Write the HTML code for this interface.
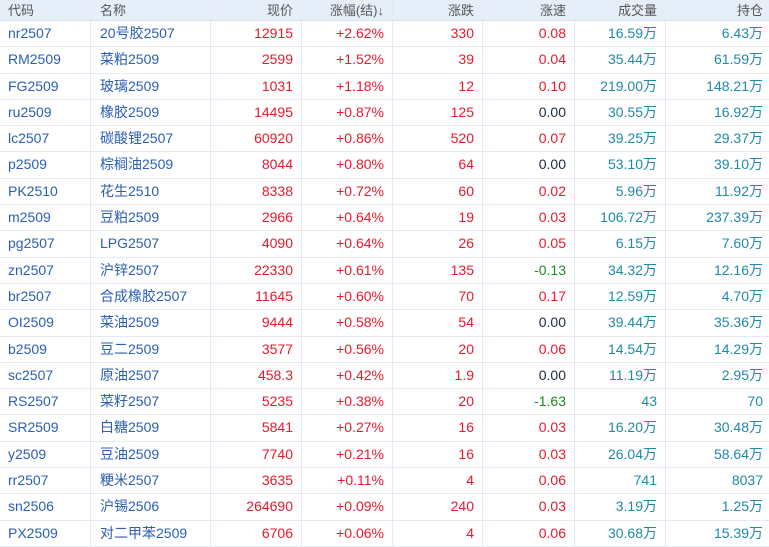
<!DOCTYPE html>
<html><head><meta charset="utf-8"><style>
*{margin:0;padding:0;box-sizing:border-box}
body{width:769px;height:547px;overflow:hidden;background:#fff;font-family:"Liberation Sans","Noto Sans CJK SC",sans-serif;font-size:14px}
.r{display:flex;height:26.3px;border-bottom:1px solid #e3eaf4;line-height:25px}
.h{height:21px;line-height:21px;background:#e6eef9;color:#555;font-size:13px;border-bottom:1px solid #d8e2f0}
.r div{border-right:1px solid #e3eaf4;white-space:nowrap;padding:0 8px 0 6px;text-align:right}
.r div:nth-child(1){width:91px;text-align:left;padding-left:8px}
.r div:nth-child(2){width:120px;text-align:left;padding-left:9px}
.r div:nth-child(3){width:91px}
.r div:nth-child(4){width:91px}
.r div:nth-child(5){width:90px}
.r div:nth-child(6){width:92px}
.r div:nth-child(7){width:91px}
.r div:nth-child(8){width:103px;border-right:none;padding-right:6px}
.b{color:#2b5fb4}
.R{color:#e8192c}.T{color:#1f8aa8}.K{color:#1d2a44}.G{color:#1c8a22}
</style></head><body>
<div class="r h"><div>代码</div><div>名称</div><div>现价</div><div>涨幅(结)↓</div><div>涨跌</div><div>涨速</div><div>成交量</div><div>持仓</div></div>
<div class="r"><div class="b">nr2507</div><div class="b">20号胶2507</div><div class="R">12915</div><div class="R">+2.62%</div><div class="R">330</div><div class="R">0.08</div><div class="T">16.59万</div><div class="T">6.43万</div></div>
<div class="r"><div class="b">RM2509</div><div class="b">菜粕2509</div><div class="R">2599</div><div class="R">+1.52%</div><div class="R">39</div><div class="R">0.04</div><div class="T">35.44万</div><div class="T">61.59万</div></div>
<div class="r"><div class="b">FG2509</div><div class="b">玻璃2509</div><div class="R">1031</div><div class="R">+1.18%</div><div class="R">12</div><div class="R">0.10</div><div class="T">219.00万</div><div class="T">148.21万</div></div>
<div class="r"><div class="b">ru2509</div><div class="b">橡胶2509</div><div class="R">14495</div><div class="R">+0.87%</div><div class="R">125</div><div class="K">0.00</div><div class="T">30.55万</div><div class="T">16.92万</div></div>
<div class="r"><div class="b">lc2507</div><div class="b">碳酸锂2507</div><div class="R">60920</div><div class="R">+0.86%</div><div class="R">520</div><div class="R">0.07</div><div class="T">39.25万</div><div class="T">29.37万</div></div>
<div class="r"><div class="b">p2509</div><div class="b">棕榈油2509</div><div class="R">8044</div><div class="R">+0.80%</div><div class="R">64</div><div class="K">0.00</div><div class="T">53.10万</div><div class="T">39.10万</div></div>
<div class="r"><div class="b">PK2510</div><div class="b">花生2510</div><div class="R">8338</div><div class="R">+0.72%</div><div class="R">60</div><div class="R">0.02</div><div class="T">5.96万</div><div class="T">11.92万</div></div>
<div class="r"><div class="b">m2509</div><div class="b">豆粕2509</div><div class="R">2966</div><div class="R">+0.64%</div><div class="R">19</div><div class="R">0.03</div><div class="T">106.72万</div><div class="T">237.39万</div></div>
<div class="r"><div class="b">pg2507</div><div class="b">LPG2507</div><div class="R">4090</div><div class="R">+0.64%</div><div class="R">26</div><div class="R">0.05</div><div class="T">6.15万</div><div class="T">7.60万</div></div>
<div class="r"><div class="b">zn2507</div><div class="b">沪锌2507</div><div class="R">22330</div><div class="R">+0.61%</div><div class="R">135</div><div class="G">-0.13</div><div class="T">34.32万</div><div class="T">12.16万</div></div>
<div class="r"><div class="b">br2507</div><div class="b">合成橡胶2507</div><div class="R">11645</div><div class="R">+0.60%</div><div class="R">70</div><div class="R">0.17</div><div class="T">12.59万</div><div class="T">4.70万</div></div>
<div class="r"><div class="b">OI2509</div><div class="b">菜油2509</div><div class="R">9444</div><div class="R">+0.58%</div><div class="R">54</div><div class="K">0.00</div><div class="T">39.44万</div><div class="T">35.36万</div></div>
<div class="r"><div class="b">b2509</div><div class="b">豆二2509</div><div class="R">3577</div><div class="R">+0.56%</div><div class="R">20</div><div class="R">0.06</div><div class="T">14.54万</div><div class="T">14.29万</div></div>
<div class="r"><div class="b">sc2507</div><div class="b">原油2507</div><div class="R">458.3</div><div class="R">+0.42%</div><div class="R">1.9</div><div class="K">0.00</div><div class="T">11.19万</div><div class="T">2.95万</div></div>
<div class="r"><div class="b">RS2507</div><div class="b">菜籽2507</div><div class="R">5235</div><div class="R">+0.38%</div><div class="R">20</div><div class="G">-1.63</div><div class="T">43</div><div class="T">70</div></div>
<div class="r"><div class="b">SR2509</div><div class="b">白糖2509</div><div class="R">5841</div><div class="R">+0.27%</div><div class="R">16</div><div class="R">0.03</div><div class="T">16.20万</div><div class="T">30.48万</div></div>
<div class="r"><div class="b">y2509</div><div class="b">豆油2509</div><div class="R">7740</div><div class="R">+0.21%</div><div class="R">16</div><div class="R">0.03</div><div class="T">26.04万</div><div class="T">58.64万</div></div>
<div class="r"><div class="b">rr2507</div><div class="b">粳米2507</div><div class="R">3635</div><div class="R">+0.11%</div><div class="R">4</div><div class="R">0.06</div><div class="T">741</div><div class="T">8037</div></div>
<div class="r"><div class="b">sn2506</div><div class="b">沪锡2506</div><div class="R">264690</div><div class="R">+0.09%</div><div class="R">240</div><div class="R">0.03</div><div class="T">3.19万</div><div class="T">1.25万</div></div>
<div class="r"><div class="b">PX2509</div><div class="b">对二甲苯2509</div><div class="R">6706</div><div class="R">+0.06%</div><div class="R">4</div><div class="R">0.06</div><div class="T">30.68万</div><div class="T">15.39万</div></div>
</body></html>
